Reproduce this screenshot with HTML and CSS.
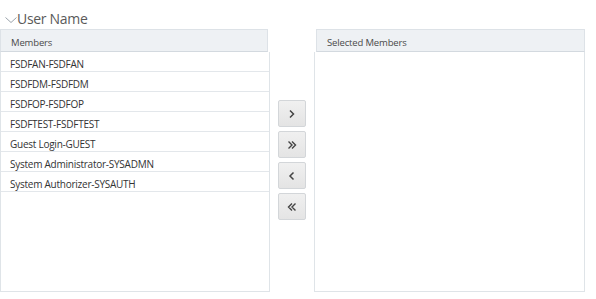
FILE: index.html
```html
<!DOCTYPE html>
<html>
<head>
<meta charset="utf-8">
<link rel="stylesheet" href="styles.css">
</head>
<body>
<div class="title">
  <svg class="chev" width="12" height="8" viewBox="0 0 12 8"><path d="M0.5 1.5 L6 6.5 L11.5 1.5" fill="none" stroke="#9aa3ab" stroke-width="1"/></svg>
  <span>User Name</span>
</div>
<div class="shuttle">
  <div class="panel left">
    <div class="head">Members</div>
    <ul class="list">
      <li>FSDFAN-FSDFAN</li>
      <li>FSDFDM-FSDFDM</li>
      <li>FSDFOP-FSDFOP</li>
      <li>FSDFTEST-FSDFTEST</li>
      <li>Guest Login-GUEST</li>
      <li>System Administrator-SYSADMN</li>
      <li>System Authorizer-SYSAUTH</li>
    </ul>
  </div>
  <div class="buttons">
    <button class="btn"><svg width="8" height="10" viewBox="0 0 8 10"><path d="M2 1.5 L5.5 5 L2 8.5" fill="none" stroke="#444" stroke-width="1.5"/></svg></button>
    <button class="btn"><svg width="10" height="10" viewBox="0 0 10 10"><path d="M1.5 1.5 L5 5 L1.5 8.5 M5 1.5 L8.5 5 L5 8.5" fill="none" stroke="#444" stroke-width="1.4"/></svg></button>
    <button class="btn"><svg width="8" height="10" viewBox="0 0 8 10"><path d="M5.5 1.5 L2 5 L5.5 8.5" fill="none" stroke="#444" stroke-width="1.5"/></svg></button>
    <button class="btn"><svg width="10" height="10" viewBox="0 0 10 10"><path d="M5 1.5 L1.5 5 L5 8.5 M8.5 1.5 L5 5 L8.5 8.5" fill="none" stroke="#444" stroke-width="1.4"/></svg></button>
  </div>
  <div class="panel right">
    <div class="head">Selected Members</div>
    <ul class="list"></ul>
  </div>
</div>
</body>
</html>
```
FILE: styles.css
```css
html, body {
  margin: 0;
  padding: 0;
  background: #fff;
}
body {
  font-family: "Open Sans", "Noto Sans", sans-serif;
  color: #333;
  width: 596px;
  height: 299px;
  overflow: hidden;
}
.title {
  height: 29px;
  display: flex;
  align-items: flex-end;
  padding-left: 5px;
  box-sizing: border-box;
  padding-bottom: 1px;
}
.title .chev {
  margin-bottom: 4px;
}
.title span {
  font-size: 14px;
  color: #5a5a5a;
  line-height: 18px;
  letter-spacing: -0.3px;
}
.shuttle {
  display: flex;
  height: 263px;
}
.panel {
  display: flex;
  flex-direction: column;
}
.panel.left {
  width: 270px;
}
.panel.right {
  width: 271px;
}
.head {
  height: 23px;
  box-sizing: border-box;
  background: #eef1f4;
  border: 1px solid #dde2e7;
  border-bottom: 1px solid #d3d9df;
  font-size: 9.5px;
  color: #4a4a4a;
  line-height: 25px;
  padding-left: 10px;
  letter-spacing: -0.15px;
  overflow: hidden;
}
.left .head {
  margin-right: 2px;
}
.right .head {
  margin-left: 2px;
}
.list {
  flex: 1;
  list-style: none;
  margin: 0;
  padding: 0;
  border: 1px solid #dfe4e8;
  border-top: none;
  box-sizing: border-box;
}
.list li {
  height: 20px;
  box-sizing: border-box;
  border-bottom: 1px solid #e3e7eb;
  font-size: 10px;
  line-height: 25px;
  padding-left: 9px;
  color: #333;
  white-space: nowrap;
  overflow: hidden;
  letter-spacing: -0.25px;
}
.buttons {
  width: 44px;
  display: flex;
  flex-direction: column;
  align-items: center;
  padding-top: 71px;
  gap: 4px;
  box-sizing: border-box;
}
.btn {
  width: 28px;
  height: 27px;
  margin: 0;
  padding: 0;
  border: 1px solid #d3d6d9;
  border-radius: 2px;
  background: linear-gradient(#f0f0f0, #e4e4e4);
  display: flex;
  align-items: center;
  justify-content: center;
}
```
